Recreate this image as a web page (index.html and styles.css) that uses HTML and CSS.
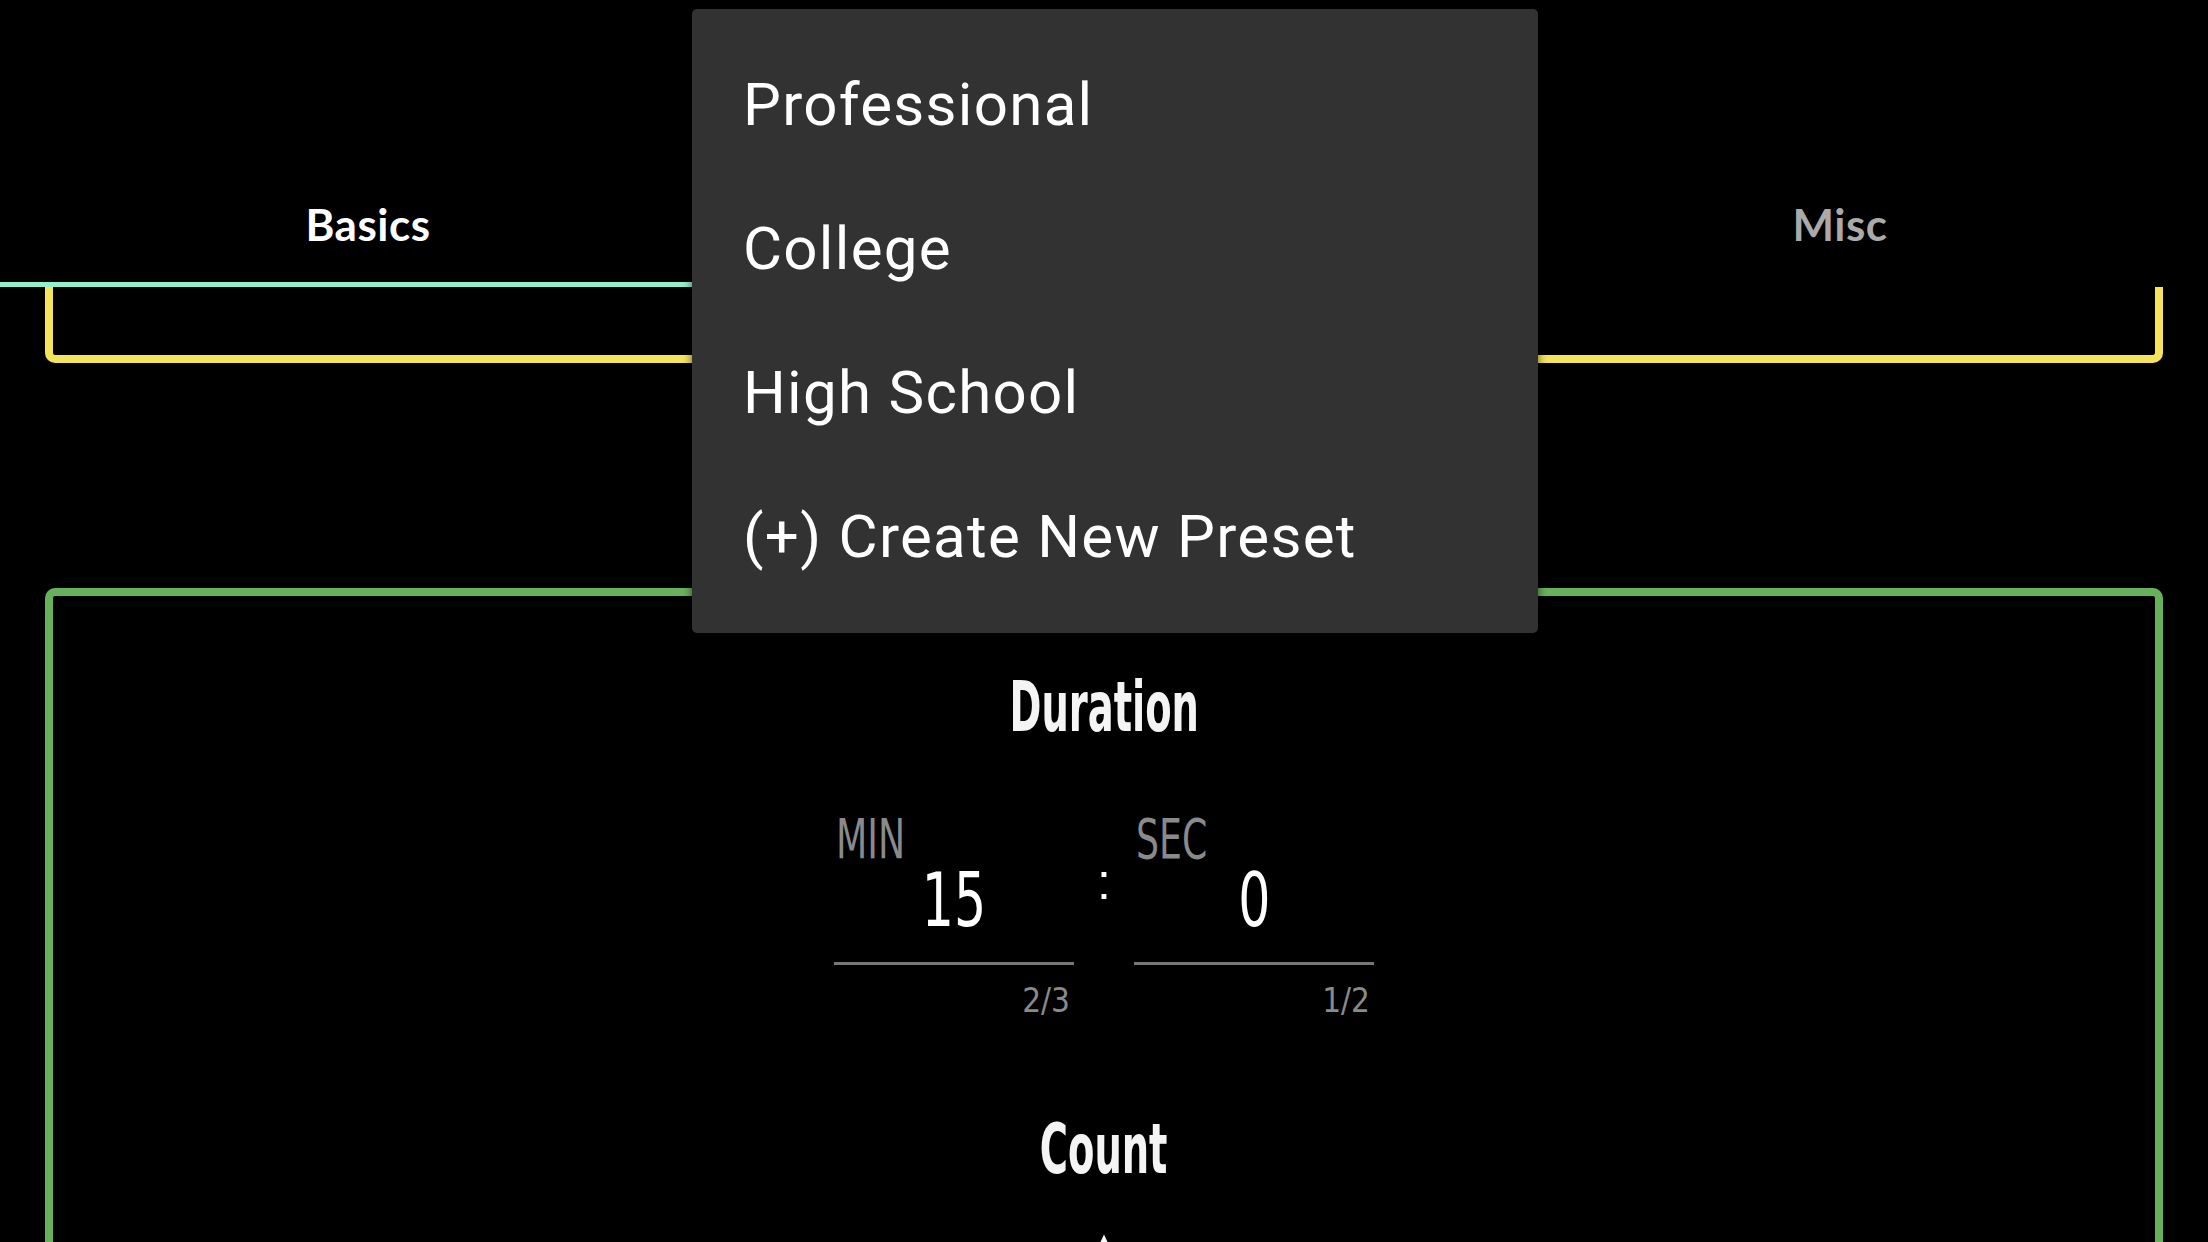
FILE: index.html
```html
<!DOCTYPE html>
<html lang="en">
<head>
    <meta charset="UTF-8">
    <meta name="viewport" content="width=device-width, initial-scale=1.0">
    <title>Game Settings</title>
    <link rel="stylesheet" href="styles.css">
</head>
<body>
    <div class="tabs">
        <div class="tab active">Basics</div>
        <div class="tab">Presets</div>
        <div class="tab">Misc</div>
    </div>

    <div class="card card-top"></div>

    <div class="card card-main">
        <h2 class="section-title"><span>Duration</span></h2>
        <div class="time-row">
            <div class="field">
                <div class="field-label"><span>MIN</span></div>
                <div class="field-value"><span>15</span></div>
            </div>
            <div class="colon">:</div>
            <div class="field">
                <div class="field-label"><span>SEC</span></div>
                <div class="field-value"><span>0</span></div>
            </div>
        </div>
        <div class="time-row">
            <div class="field-count"><span>2/3</span></div>
            <div class="colon-space"></div>
            <div class="field-count"><span>1/2</span></div>
        </div>

        <h2 class="section-title count-title"><span>Count</span></h2>
        <div class="count-icon">
            <svg width="60" height="60" viewBox="0 0 24 24"><path d="M12 1l3.1 6.6 7.2.8-5.4 4.9 1.5 7.1L12 16.8 5.6 20.4l1.5-7.1L1.7 8.4l7.2-.8z" fill="#fff"/></svg>
        </div>
    </div>

    <!-- preset dropdown, open -->
    <div class="menu">
        <div class="menu-item">Professional</div>
        <div class="menu-item">College</div>
        <div class="menu-item">High School</div>
        <div class="menu-item">(+) Create New Preset</div>
    </div>
</body>
</html>
```

FILE: styles.css
```css
body {
    margin: 0;
    padding: 0;
    background: #000;
    color: #fff;
    font-family: "Roboto", "Liberation Sans", sans-serif;
    height: 1242px;
    overflow: hidden;
    position: relative;
}
.tabs {
    display: grid;
    grid-template-columns: repeat(3, 1fr);
}
.tab {
    height: 282px;
    padding-top: 202px;
    box-sizing: border-box;
    border-bottom: 5px solid transparent;
    text-align: center;
    font-family: "Lato", "Open Sans", sans-serif;
    font-weight: 700;
    font-size: 44px;
    line-height: 44px;
    letter-spacing: 0.5px;
    color: #aaaaaa;
}
.tab.active {
    color: #fff;
    border-bottom-color: #8ff1d1;
    height: 287px;
}
.card {
    margin: 0 45px;
    border: 8px solid;
    box-sizing: border-box;
}
.card-top {
    height: 76px;
    border-color: #f6e35c;
    border-top: none;
    border-radius: 0 0 10px 10px;
}
.card-main {
    margin-top: 225px;
    height: 900px;
    border-color: #68b15b;
    border-radius: 10px;
    padding-top: 76px;
}
.section-title {
    margin: 0;
    text-align: center;
    font-family: "Liberation Sans Narrow", "DejaVu Sans Condensed", sans-serif;
    font-weight: 700;
    font-size: 70px;
    line-height: 70px;
    color: #f4f4f4;
}
.section-title span {
    display: inline-block;
    transform: scaleX(0.61);
}
.time-row {
    display: flex;
    justify-content: center;
}
.section-title + .time-row {
    margin-top: 73px;
}
.field {
    width: 240px;
    border-bottom: 3px solid #767676;
    padding-bottom: 24px;
    font-family: "DejaVu Sans Condensed", sans-serif;
}
.field span, .field-count span {
    display: inline-block;
}
.field-label {
    font-size: 56px;
    line-height: 48px;
    color: #8a8a8a;
    padding-left: 2px;
}
.field-label span {
    transform: scaleX(0.72);
    transform-origin: left center;
}
.field-value {
    font-size: 75px;
    line-height: 75px;
    text-align: center;
    color: #fff;
}
.field-value span {
    transform: scaleX(0.75);
}
.colon {
    width: 60px;
    margin-top: 42px;
    text-align: center;
    font-family: "Liberation Sans", sans-serif;
    font-size: 50px;
    line-height: 50px;
}
.colon-space {
    width: 60px;
}
.field-count {
    width: 240px;
    margin-top: 19px;
    text-align: right;
    font-family: "DejaVu Sans Condensed", sans-serif;
    font-size: 33px;
    line-height: 33px;
    color: #8a8a8a;
    padding-right: 4px;
    box-sizing: border-box;
}
.count-title {
    margin-top: 97px;
}
.count-icon {
    margin-top: 48px;
    text-align: center;
}
.menu {
    position: absolute;
    left: 692px;
    top: 9px;
    width: 846px;
    padding: 24px 0;
    background: #323232;
    border-radius: 5px;
    box-shadow: 0 2px 10px rgba(0, 0, 0, 0.6);
}
.menu-item {
    height: 144px;
    display: flex;
    align-items: center;
    padding-left: 51px;
    font-size: 60px;
    line-height: 60px;
    letter-spacing: 1.3px;
    color: #fff;
}
```
